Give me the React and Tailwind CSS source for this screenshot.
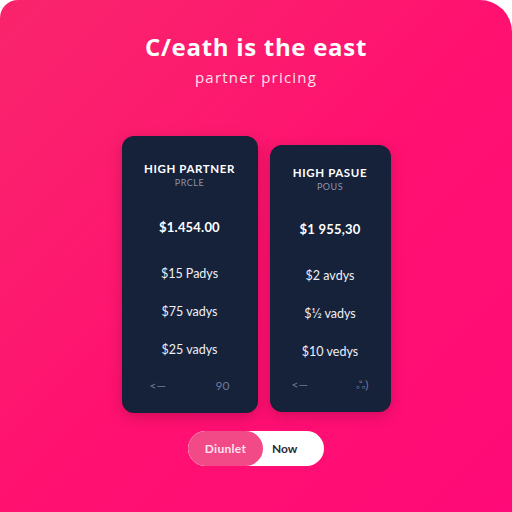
export default function App() {
  const cards = [
    {
      title: "HIGH PARTNER",
      sub: "PRCLE",
      price: "$1.454.00",
      rows: ["$15 Padys", "$75 vadys", "$25 vadys"],
      left: "<—",
      right: "90",
      w: "w-[136px]",
      h: "h-[277px]",
      mt: "mt-0",
      pt: "pt-[26px]",
      px: "px-[28px]",
      priceMt: "mt-[30px]",
    },
    {
      title: "HIGH PASUE",
      sub: "POUS",
      price: "$1 955,30",
      rows: ["$2 avdys", "$1⁄2 vadys", "$10 vedys"],
      left: "<—",
      right: "ஃ)",
      w: "w-[121px]",
      h: "h-[267px]",
      mt: "mt-[9px]",
      pt: "pt-[21px]",
      px: "px-[22px]",
      priceMt: "mt-[28px]",
    },
  ];

  return (
    <div className="w-[512px] h-[512px] bg-white">
      <div
        className="w-full h-full rounded-tl-[18px] rounded-tr-[32px] bg-gradient-to-br from-[#f9246c] via-[#ff1170] to-[#ff0a78] flex flex-col items-center"
        style={{ fontFamily: "Lato, 'Open Sans', sans-serif" }}
      >
        <h1
          className="mt-[32px] text-[24px] leading-[30px] font-bold text-white tracking-[0.7px]"
          style={{ fontFamily: "'Open Sans', sans-serif" }}
        >
          C/eath is the east
        </h1>
        <p
          className="mt-[6px] text-[15px] leading-[18px] text-[#ffe2ec] tracking-[1.2px]"
          style={{ fontFamily: "'Open Sans', sans-serif" }}
        >
          partner pricing
        </p>

        <div className="mt-[50px] flex items-start gap-[12px]">
          {cards.map((c) => (
            <div
              key={c.title}
              className={`${c.w} ${c.h} ${c.mt} ${c.pt} ${c.px} rounded-[12px] bg-[#16213a] flex flex-col items-center text-white shadow-[0_4px_14px_rgba(80,0,30,0.25)]`}
            >
              <div className="text-[11.5px] leading-[14px] font-bold tracking-[0.6px] whitespace-nowrap">
                {c.title}
              </div>
              <div className="mt-[1px] text-[9px] leading-[12px] text-[#8d94ac] tracking-[0.5px]">
                {c.sub}
              </div>
              <div className={`${c.priceMt} text-[13px] leading-[16px] font-bold tracking-[0.2px]`}>
                {c.price}
              </div>
              <div className="mt-[31px] flex flex-col items-center gap-[22px] text-[12.5px] leading-[16px] text-[#eef0f6]">
                {c.rows.map((r) => (
                  <div key={r} className="whitespace-nowrap">
                    {r}
                  </div>
                ))}
              </div>
              <div className="mt-auto mb-[20px] w-full flex justify-between text-[12px] leading-[14px] text-[#717a94]">
                <span>{c.left}</span>
                <span>{c.right}</span>
              </div>
            </div>
          ))}
        </div>

        <div className="mt-[18px] w-[136px] h-[35px] rounded-full bg-white flex items-center overflow-hidden">
          <div className="h-full w-[75px] rounded-full bg-[#f24a86] flex items-center justify-center text-[12px] text-[#ffe3ee] font-bold tracking-[0.3px]">
            Diunlet
          </div>
          <div className="ml-[9px] text-[12px] font-bold text-[#2b2b35]">Now</div>
        </div>
      </div>
    </div>
  );
}
